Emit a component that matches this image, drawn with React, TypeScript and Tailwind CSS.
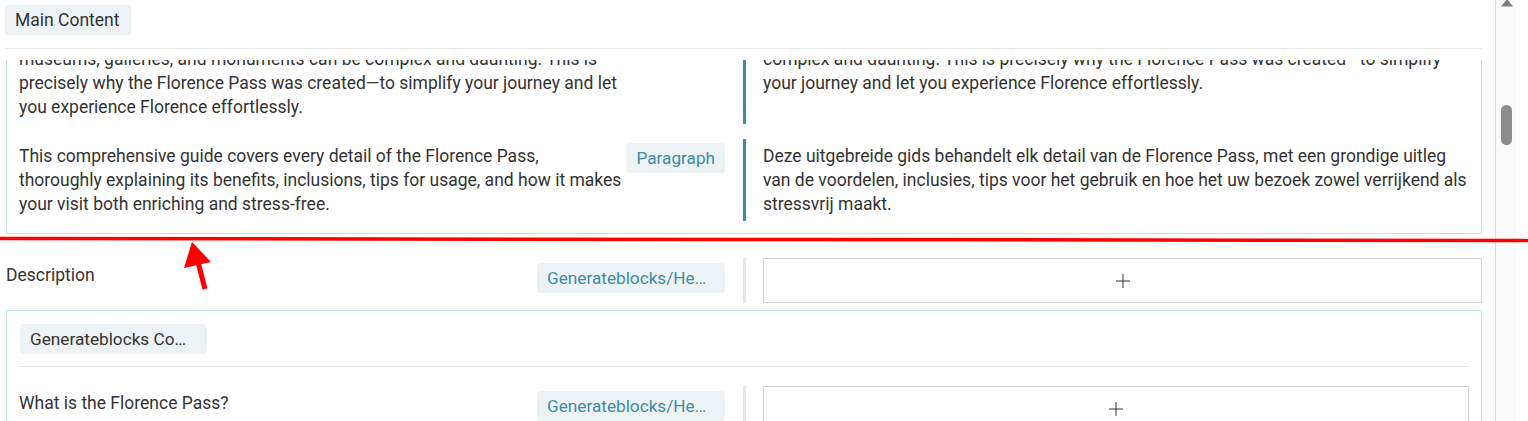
import { Fragment } from 'react'

const textColor = 'text-[#333333]'

const Badge = ({ label, tone = 'plain', className = '' }: { label: string; tone?: 'plain' | 'teal'; className?: string }) => (
  <span
    className={`block h-[30px] shrink-0 truncate rounded-[4px] bg-[#edf3f5] pl-[10px] text-[17.2px] leading-[30px] ${
      tone === 'teal' ? 'text-[#3e8ca3]' : textColor
    } ${className}`}
  >
    {label}
  </span>
)

const PlusBox = () => (
  <div className="flex h-[45px] w-full items-center justify-center border border-[#d6d6d6] bg-white">
    <svg width="14" height="14" viewBox="0 0 14 14">
      <path d="M7 0v14M0 7h14" stroke="#333" strokeWidth="1" />
    </svg>
  </div>
)

// middle column of every row: 38px wide, the bar sits 18px in
const Bar = ({ color }: { color: string }) => (
  <div className="flex">
    <div className={`ml-[18px] w-[3px] ${color}`} />
  </div>
)

interface TranslatedRowProps {
  source: React.ReactNode
  target: React.ReactNode
}

// paragraph row: source text + block badge | teal bar | translation
const TranslatedRow = ({ source, target }: TranslatedRowProps) => (
  <div className="grid grid-cols-[1fr_38px_1fr]">
    <div className="flex items-start pb-[5px] pt-[4px]">
      <p className="mt-[1px] min-w-0 flex-1 pr-[2px]">{source}</p>
      <Badge label="Paragraph" tone="teal" className="pr-[10px]" />
    </div>
    <Bar color="bg-[#3e8ca3]" />
    <div className="py-[5px]">
      <p>{target}</p>
    </div>
  </div>
)

// block without translation yet: label + block badge | gray bar | empty box
const EmptyRow = ({ label }: { label: string }) => (
  <div className="grid grid-cols-[1fr_38px_1fr]">
    <div className="flex items-start justify-between pt-[5px]">
      <span>{label}</span>
      <Badge label="Generateblocks/Headline" tone="teal" className="w-[188px] pr-[10px]" />
    </div>
    <Bar color="bg-[#e6e6e6]" />
    <PlusBox />
  </div>
)

export default function App() {
  return (
    <div
      className={`relative flex h-[421px] w-[1528px] overflow-hidden bg-white text-[17.5px] leading-[24px] ${textColor}`}
      style={{ fontFamily: 'Roboto, "Liberation Sans", sans-serif' }}
    >
      <div className="flex w-[1495px] shrink-0 flex-col">
        <div className="h-[60px] shrink-0 pl-[5px] pr-[13px] pt-[5px]">
          <div className="flex border-b border-[#e8e8e8] pb-[13px]">
            <Badge label="Main Content" className="pr-[11px] text-[17.5px]" />
          </div>
        </div>

        <div className="min-h-0 flex-1 overflow-hidden pl-[6px] pr-[13px]">
          <div className="-mt-[55px]">
            <div className="flex flex-col gap-[15px] border border-[#c6e0e6] p-[12px]">
              <TranslatedRow
                source={
                  <Fragment>
                    Exploring Florence is a dream for many travelers, yet navigating its
                    <br />
                    museums, galleries, and monuments can be complex and daunting. This is precisely why
                    the Florence Pass was created—to simplify your journey and let you experience Florence
                    effortlessly.
                  </Fragment>
                }
                target={
                  <Fragment>
                    Exploring Florence is a dream for many travelers, yet its museums can be
                    <br />
                    complex and daunting. This is precisely why the Florence Pass was created—to simplify
                    your journey and let you experience Florence effortlessly.
                  </Fragment>
                }
              />
              <TranslatedRow
                source="This comprehensive guide covers every detail of the Florence Pass, thoroughly explaining its benefits, inclusions, tips for usage, and how it makes your visit both enriching and stress-free."
                target="Deze uitgebreide gids behandelt elk detail van de Florence Pass, met een grondige uitleg van de voordelen, inclusies, tips voor het gebruik en hoe het uw bezoek zowel verrijkend als stressvrij maakt."
              />
            </div>

            <div className="mt-[24px]">
              <EmptyRow label="Description" />
            </div>

            <div className="mt-[7px] border border-[#c6e0e6] px-[12px] pt-[13px]">
              <div className="flex pl-[1px]">
                <Badge label="Generateblocks Container" className="w-[187px] pr-[16px]" />
              </div>
              <div className="mt-[12px] border-b border-[#e8e8e8]" />
              <div className="mt-[19px] pb-[12px]">
                <EmptyRow label="What is the Florence Pass?" />
              </div>
            </div>
          </div>
        </div>
      </div>

      {/* scrollbar */}
      <div className="flex w-[21px] shrink-0 flex-col border-l border-[#dcdcdc] bg-[#fafafa]">
        <svg width="20" height="8" viewBox="0 0 20 8" className="shrink-0">
          <polygon points="5,6.5 17,6.5 11,-1" fill="#7d7d7d" />
        </svg>
        <div className="ml-[5px] mt-[97px] h-[40px] w-[11px] rounded-full bg-[#8c8c8c]" />
      </div>
      <div className="flex-1" />

      {/* red annotation drawn over the screenshot */}
      <svg className="pointer-events-none absolute left-0 top-0" width="1528" height="421" viewBox="0 0 1528 421">
        <line x1="0" y1="238.5" x2="1528" y2="240.5" stroke="#ff0000" strokeWidth="3.5" />
        <line x1="198" y1="262" x2="205" y2="289" stroke="#ff0000" strokeWidth="5" />
        <polygon points="192,242 184,268 211,262" fill="#ff0000" />
      </svg>
    </div>
  )
}
